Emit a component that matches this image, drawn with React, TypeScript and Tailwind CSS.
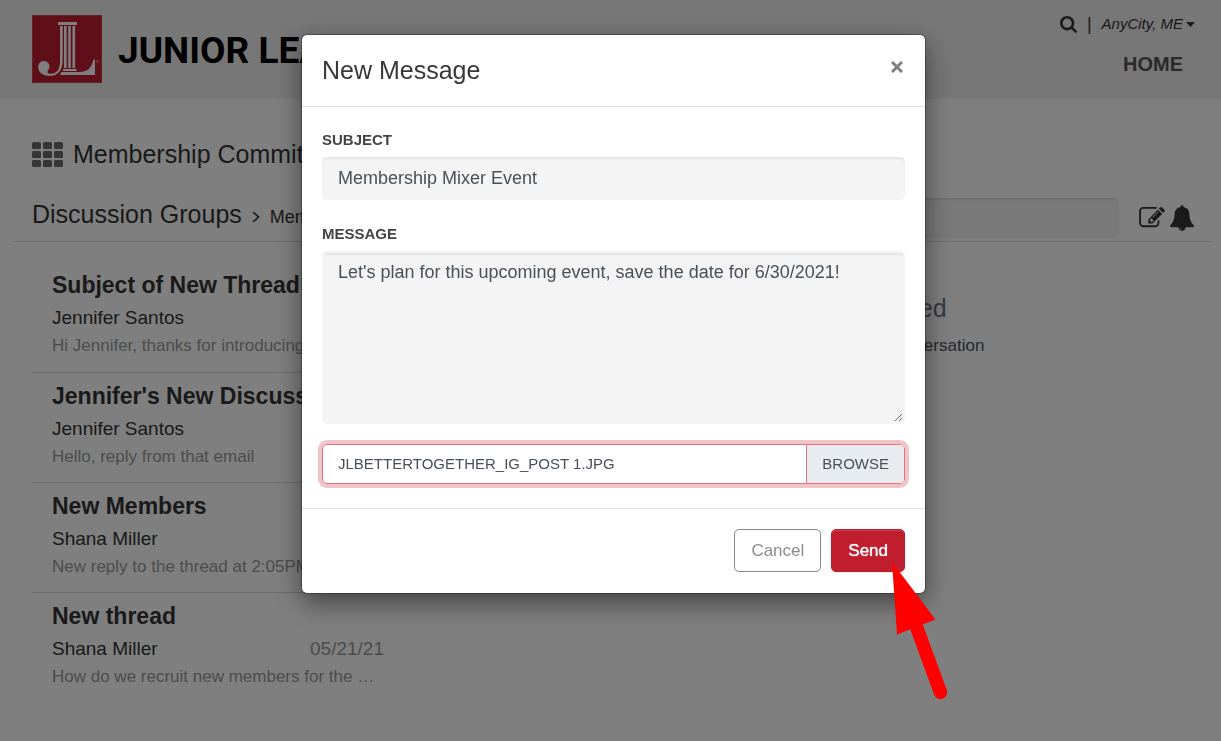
import React from "react";

type Thread = { title: string; author: string; preview: string; date: string };

const threads: Thread[] = [
  { title: "Subject of New Thread", author: "Jennifer Santos", preview: "Hi Jennifer, thanks for introducing …", date: "06/02/21" },
  { title: "Jennifer's New Discussion", author: "Jennifer Santos", preview: "Hello, reply from that email", date: "06/01/21" },
  { title: "New Members", author: "Shana Miller", preview: "New reply to the thread at 2:05PM", date: "05/28/21" },
  { title: "New thread", author: "Shana Miller", preview: "How do we recruit new members for the …", date: "05/21/21" },
];

function Logo() {
  return (
    <svg viewBox="0 0 70 68" className="h-[68px] w-[70px] shrink-0" role="img" aria-label="JL">
      <rect width="70" height="68" fill="#c01d2e" />
      <rect x=".5" y=".5" width="69" height="67" fill="none" stroke="#c8404e" />
      <g fill="#fff">
        <rect x="26" y="7" width="19" height="3" />
        <rect x="32" y="11" width="2.6" height="42" />
        <rect x="36.2" y="11" width="2.6" height="42" />
        <rect x="40.500" y="11" width="2.600" height="42" />
        <rect x="31" y="54" width="13.500" height="2" />
        <path d="M29.500 57h18c8 0 12-4 14-12.500H63V60H28z" />
        <path d="M28 11h2.700v34c0 10-4.700 16-13.200 16C11 61 6.200 57.500 6.200 52c0-3.500 2.300-6 5.500-6s5.800 2.300 5.800 5.500c0 2.800-2 3.500-2 5.200 0 1.300 1.200 2.100 3.200 2.100C25 58.800 28 54 28 46z" />
      </g>
      <circle cx="65.500" cy="46.500" r="1" fill="none" stroke="#fff" strokeWidth=".5" />
    </svg>
  );
}

function GridIcon() {
  return (
    <svg viewBox="0 0 31 25" className="h-[25px] w-[31px]" fill="#6a6a6a" aria-hidden="true">
      {[0, 9, 18].map((y) => [0, 11, 22].map((x) => <rect key={`${x}-${y}`} x={x} y={y} width="9" height="7" rx="1.500" />))}
    </svg>
  );
}

function SearchIcon() {
  return (
    <svg viewBox="0 0 1664 1664" className="h-[17px] w-[17px]" fill="currentColor" aria-hidden="true">
      <path d="M1152 704q0-185-131.500-316.500T704 256 387.500 387.500 256 704t131.500 316.500T704 1152t316.500-131.500T1152 704zm512 832q0 52-38 90t-90 38q-54 0-90-38l-343-342q-179 124-399 124-143 0-273.500-55.500t-225-150-150-225T0 704t55.500-273.500 150-225 225-150T704 0t273.500 55.500 225 150 150 225T1408 704q0 220-124 399l343 343q37 37 37 90z" />
    </svg>
  );
}

function EditIcon() {
  return (
    <svg viewBox="0 0 1792 1536" className="h-[22px] w-[26px]" fill="currentColor" aria-hidden="true">
      <path d="M888 1056l116-116-152-152-116 116v56h96v96h56zm440-720q-16-16-33 1L945 687q-17 17-1 33t33-1l350-350q17-17 1-33zm80 594v190q0 119-84.500 203.500T1120 1408H288q-119 0-203.500-84.500T0 1120V288Q0 169 84.500 84.500T288 0h832q63 0 117 25 15 7 18 23 3 17-9 29l-49 49q-14 14-32 8-23-6-45-6H288q-66 0-113 47t-47 113v832q0 66 47 113t113 47h832q66 0 113-47t47-113V994q0-13 9-22l64-64q15-15 35-7t20 29zm-96-738l288 288-672 672H640V864zm444 132l-92 92-288-288 92-92q28-28 68-28t68 28l152 152q28 28 28 68t-28 68z" />
    </svg>
  );
}

function BellIcon() {
  return (
    <svg viewBox="64 0 1664 1792" className="h-[26px] w-6" fill="currentColor" aria-hidden="true">
      <path d="M912 1696q0-16-16-16-59 0-101.500-42.500T752 1536q0-16-16-16t-16 16q0 73 51.500 124.500T896 1712q16 0 16-16zM1728 1408q0 52-38 90t-90 38h-448q0 106-75 181t-181 75-181-75-75-181H192q-52 0-90-38t-38-90q50-42 91-88t85-119.500 74.500-158.500 50-206T384 576q0-152 117-282.500T808 135q-8-19-8-39 0-40 28-68t68-28 68 28 28 68q0 20-8 39 190 28 307 158.500T1408 576q0 139 19.500 260t50 206 74.500 158.500 85 119.500 91 88z" />
    </svg>
  );
}

function Background() {
  return (
    <div className="min-h-screen bg-white">
      <header className="flex h-[99px] items-start justify-between bg-[#efefef] pr-[26px] pl-8">
        <div className="flex items-center gap-4 pt-[15px]">
          <Logo />
          <span className="pt-0.5 font-['Roboto',sans-serif] text-[37px] leading-none font-bold whitespace-nowrap text-black">JUNIOR LEAGUE</span>
        </div>
        <div className="flex flex-col items-end pt-[14px]">
          <div className="flex items-center gap-[10px] text-[15px] leading-[20px]">
            <button type="button" aria-label="Search"><SearchIcon /></button>
            <span className="text-lg leading-[20px]">|</span>
            <button type="button" className="flex items-center gap-[3px] italic">
              AnyCity, ME
              <svg viewBox="0 0 9 5" className="h-[5px] w-[9px]" fill="currentColor" aria-hidden="true"><path d="M0 0h9L4.500 5z" /></svg>
            </button>
          </div>
          <a href="#home" className="mt-[18px] mr-3 text-[20px] leading-[24px] font-bold text-[#555]">HOME</a>
        </div>
      </header>

      <main>
        <h1 className="flex items-center gap-[10px] pt-[38px] pl-8 text-[25px] leading-[34px]">
          <GridIcon />
          Membership Committee
        </h1>
        <div className="mr-[7px] ml-[14px] flex h-[71px] items-end justify-between border-b border-[#d9d9d9] pr-5 pl-[18px]">
          <div className="flex items-baseline gap-[10px] pb-[10px]">
            <h2 className="text-[25px] leading-[34px]">Discussion Groups</h2>
            <svg viewBox="0 0 8 12" className="h-3 w-2" fill="none" stroke="currentColor" strokeWidth="1.600" aria-hidden="true"><path d="M1 1l5.500 5L1 11" /></svg>
            <span className="text-[18px]">Membership Chat</span>
          </div>
          <div className="flex items-center pb-[3px]">
            <input aria-label="Search discussions" className="mr-5 h-10 w-[300px] rounded-[5px] bg-[#f3f3f3] px-4 shadow-[inset_0_2px_2px_rgba(0,0,0,0.08)]" />
            <div className="flex items-center gap-[5px]">
              <button type="button" aria-label="New message"><EditIcon /></button>
              <button type="button" aria-label="Notifications"><BellIcon /></button>
            </div>
          </div>
        </div>

        <div className="flex">
          <ul className="ml-8 w-[370px] shrink-0">
            {threads.map((t) => (
              <li key={t.title} className="border-b border-[#d9d9d9] px-5 pt-2 pb-3 first:pt-7 first:pb-[13px] last:border-0">
                <h3 className="text-[23px] leading-[30px] font-bold">{t.title}</h3>
                <div className="flex justify-between pt-1 text-[19px] leading-[28px]">
                  <span>{t.author}</span>
                  <span className="-mr-0.5 text-[#999]">{t.date}</span>
                </div>
                <p className="text-[17px] leading-[27px] whitespace-nowrap text-[#999]">{t.preview}</p>
              </li>
            ))}
          </ul>
          <section className="flex-1 pt-[49px] pr-5 text-center text-[#6c757d]">
            <h2 className="text-[25px] leading-[34px]">No Conversation Selected</h2>
            <p className="pt-[7px] text-[17px] leading-[27px] text-[#495057]">Select a thread from the list to view conversation</p>
          </section>
        </div>
      </main>
    </div>
  );
}

function MessageDialog() {
  return (
    <form role="dialog" aria-labelledby="dialog-title" onSubmit={(e) => e.preventDefault()} className="relative w-full max-w-[623px] self-start rounded-[5px] bg-white shadow-[0_0_0_1px_rgba(0,0,0,0.3),0_9px_27px_rgba(0,0,0,0.5)]">
      <div className="flex items-start justify-between border-b border-[#dee2e6] px-5 pt-[18px] pb-[19px]">
        <h2 id="dialog-title" className="text-[25px] leading-[34px] text-[#383838]">New Message</h2>
        <button type="button" aria-label="Close" className="flex h-7 w-4 items-center justify-center text-[#808080]">
          <svg viewBox="0 0 12 12" className="h-3 w-3" fill="none" stroke="currentColor" strokeWidth="3" aria-hidden="true"><path d="M1 1l10 10M11 1L1 11" /></svg>
        </button>
      </div>

      <div className="px-5 pt-[22px] pb-6">
        <label htmlFor="subject" className="block pb-[6px] text-[15px] leading-[22px] font-bold text-[#444]">SUBJECT</label>
        <input id="subject" defaultValue="Membership Mixer Event" className="block h-[43px] w-full rounded-[5px] bg-[#f4f4f4] px-4 text-[18px] text-[#495057] shadow-[inset_0_2px_2px_rgba(0,0,0,0.06)]" />
        <label htmlFor="message" className="block pt-[23px] pb-[6px] text-[15px] leading-[22px] font-bold text-[#444]">MESSAGE</label>
        <textarea id="message" defaultValue="Let's plan for this upcoming event, save the date for 6/30/2021!" className="block h-[173px] w-full resize-y rounded-[5px] border-2 border-transparent bg-[#f4f4f4] bg-clip-border px-[14px] py-[6px] text-[18px] leading-[27px] text-[#495057] shadow-[inset_0_2px_2px_rgba(0,0,0,0.06)]" />
        <input id="attachment" type="file" className="sr-only" />
        <label htmlFor="attachment" className="mt-5 flex h-10 items-stretch overflow-hidden rounded-[5px] border border-[#eb6f7c] text-[15px] text-[#495057] shadow-[0_0_0_4px_#f0c5c9]">
          <span className="flex flex-1 items-center px-[15px]">JLBETTERTOGETHER_IG_POST 1.JPG</span>
          <span className="flex items-center border-l border-[#eb6f7c] bg-[#e9ecef] px-[15px]">BROWSE</span>
        </label>
      </div>

      <div className="flex justify-end gap-[10px] border-t border-[#dee2e6] px-5 pt-5 pb-[21px]">
        <button type="button" className="h-[43px] rounded-[5px] border border-[#868686] bg-white px-4 text-[17px] text-[#8c8c8c]">Cancel</button>
        <button type="submit" className="h-[43px] rounded-[5px] border border-[#c01e2e] bg-[#c01e2e] px-4 text-[17px] text-white shadow-[inset_0_1px_0_rgba(255,255,255,0.15),0_1px_1px_rgba(0,0,0,0.08)] [text-shadow:0_0_1px_#fff]">Send</button>
      </div>

      <svg viewBox="0 0 60 140" className="pointer-events-none absolute top-[527px] left-[588px] h-[140px] w-[60px]" fill="#f00" aria-hidden="true">
        <path d="M2 0L45.500 57.500 7 72.500z" />
        <path d="M24 58L50.500 130.500" stroke="#f00" strokeWidth="13.500" strokeLinecap="round" />
      </svg>
    </form>
  );
}

export default function App() {
  return (
    <div className="font-['Liberation_Sans',Arial,sans-serif] text-[#343434]">
      <Background />
      <div className="fixed inset-0 flex justify-center overflow-hidden bg-black/50 pt-[35px] pl-1.5">
        <MessageDialog />
      </div>
    </div>
  );
}
